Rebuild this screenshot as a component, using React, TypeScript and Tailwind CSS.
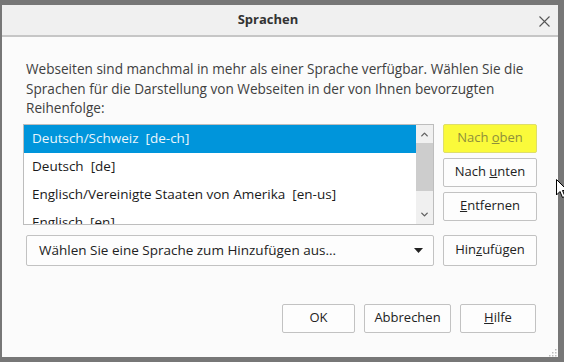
import { ChevronUp, ChevronDown } from 'lucide-react';

const font = { fontFamily: '"Open Sans", "Noto Sans", sans-serif' };

const languages = [
  'Deutsch/Schweiz\u00a0\u00a0[de-ch]',
  'Deutsch\u00a0\u00a0[de]',
  'Englisch/Vereinigte Staaten von Amerika\u00a0\u00a0[en-us]',
  'Englisch\u00a0\u00a0[en]',
];

function Btn({ children, className = '' }: { children: React.ReactNode; className?: string }) {
  return (
    <button
      className={
        'h-[29px] flex items-center justify-center rounded-[2px] border text-[13px] ' +
        (className || 'border-[#c2c2c2] bg-[#fdfdfd] text-[#222]')
      }
    >
      {children}
    </button>
  );
}

export default function App() {
  return (
    <div className="relative w-[564px] h-[362px] overflow-hidden bg-[#777777] pt-[5px] pl-[2px]" style={font}>
      <div className="w-[556px] h-[352px] bg-[#fbfbfb] flex flex-col">
        {/* title bar */}
        <div className="relative h-[32px] bg-[#f0f0f0] border-b-2 border-[#c6c6c6] flex items-center justify-center pr-[24px]">
          <span className="text-[13px] font-bold text-[#333]">Sprachen</span>
          <svg className="absolute right-[8px] top-[11px]" width="11" height="11" viewBox="0 0 11 11">
            <path d="M0.5 0.5 L10.5 10.5 M10.5 0.5 L0.5 10.5" stroke="#555" strokeWidth="1.1" />
          </svg>
        </div>

        <div className="flex-1 flex flex-col pl-[21px] pr-[20px] pt-[22px]">
          <p className="ml-[3px] text-[13.6px] leading-[19.5px] text-[#404040] whitespace-nowrap">
            Webseiten sind manchmal in mehr als einer Sprache verfügbar. Wählen Sie die
            <br />
            Sprachen für die Darstellung von Webseiten in der von Ihnen bevorzugten
            <br />
            Reihenfolge:
          </p>

          <div className="mt-[6px] flex gap-[9px]">
            <div className="w-[411px] h-[101px] border border-[#bdbdbd] bg-white flex overflow-hidden">
              <div className="flex-1 flex flex-col">
                {languages.map((l, i) => (
                  <div
                    key={l}
                    className={
                      'h-[28px] shrink-0 flex items-center pl-[8px] text-[13.5px] ' +
                      (i === 0 ? 'bg-[#0095db] text-[#eaf5fc]' : 'text-[#1a1a1a]')
                    }
                  >
                    {l}
                  </div>
                ))}
              </div>
              <div className="w-[17px] bg-[#f0f0f0] flex flex-col items-center">
                <ChevronUp className="w-[11px] h-[11px] text-[#606060] mt-[4px]" strokeWidth={3} />
                <div className="w-[17px] h-[48px] bg-[#cdcdcd] mt-[3px]" />
                <div className="flex-1" />
                <ChevronDown className="w-[11px] h-[11px] text-[#606060] mb-[4px]" strokeWidth={3} />
              </div>
            </div>
            <div className="flex flex-col gap-[5px] w-[94px]">
              <Btn className="border-[#dede6a] bg-[#fafa3a] text-[#8f8f3a]">
                Nach&nbsp;<u>o</u>ben
              </Btn>
              <Btn>
                Nach&nbsp;<u>u</u>nten
              </Btn>
              <Btn>
                <u>E</u>ntfernen
              </Btn>
            </div>
          </div>

          <div className="mt-[10px] flex gap-[9px]">
            <div className="ml-[3px] w-[408px] h-[31px] rounded-[2px] border border-[#c2c2c2] bg-[#fdfdfd] flex items-center pl-[12px] pr-[10px] text-[13.5px] text-[#222]">
              <span className="flex-1">Wählen Sie eine Sprache zum Hinzufügen aus...</span>
              <svg width="9" height="5" viewBox="0 0 9 5">
                <path d="M0 0 H9 L4.5 5 Z" fill="#222" />
              </svg>
            </div>
            <div className="w-[94px] h-[31px]">
              <button className="w-full h-full rounded-[2px] border border-[#c2c2c2] bg-[#fdfdfd] text-[13px] text-[#222]">
                Hin<u>z</u>ufügen
              </button>
            </div>
          </div>

          <div className="mt-[38px] flex justify-end gap-[9px] pr-[2px]">
            <Btn className="w-[73px] border-[#c2c2c2] bg-[#fdfdfd] text-[#222]">OK</Btn>
            <Btn className="w-[87px] border-[#c2c2c2] bg-[#fdfdfd] text-[#222]">Abbrechen</Btn>
            <Btn className="w-[76px] border-[#c2c2c2] bg-[#fdfdfd] text-[#222]">
              <u>H</u>ilfe
            </Btn>
          </div>
        </div>

        {/* resize grip */}
        <svg className="absolute left-[549px] top-[349px]" width="8" height="8" viewBox="0 0 8 8">
          <rect x="6" y="0" width="1.5" height="1.5" fill="#bbb" />
          <rect x="3" y="3" width="1.5" height="1.5" fill="#bbb" />
          <rect x="6" y="3" width="1.5" height="1.5" fill="#bbb" />
          <rect x="0" y="6" width="1.5" height="1.5" fill="#bbb" />
          <rect x="3" y="6" width="1.5" height="1.5" fill="#bbb" />
          <rect x="6" y="6" width="1.5" height="1.5" fill="#bbb" />
        </svg>
      </div>

      {/* mouse cursor */}
      <svg className="absolute left-[556px] top-[179px]" width="13" height="21" viewBox="0 0 13 21">
        <path d="M0.5 0.5 L0.5 16 L4 12.5 L6.5 18.5 L9 17.5 L6.5 11.5 L11.5 11.5 Z" fill="#fff" stroke="#000" strokeWidth="1" />
      </svg>
    </div>
  );
}
